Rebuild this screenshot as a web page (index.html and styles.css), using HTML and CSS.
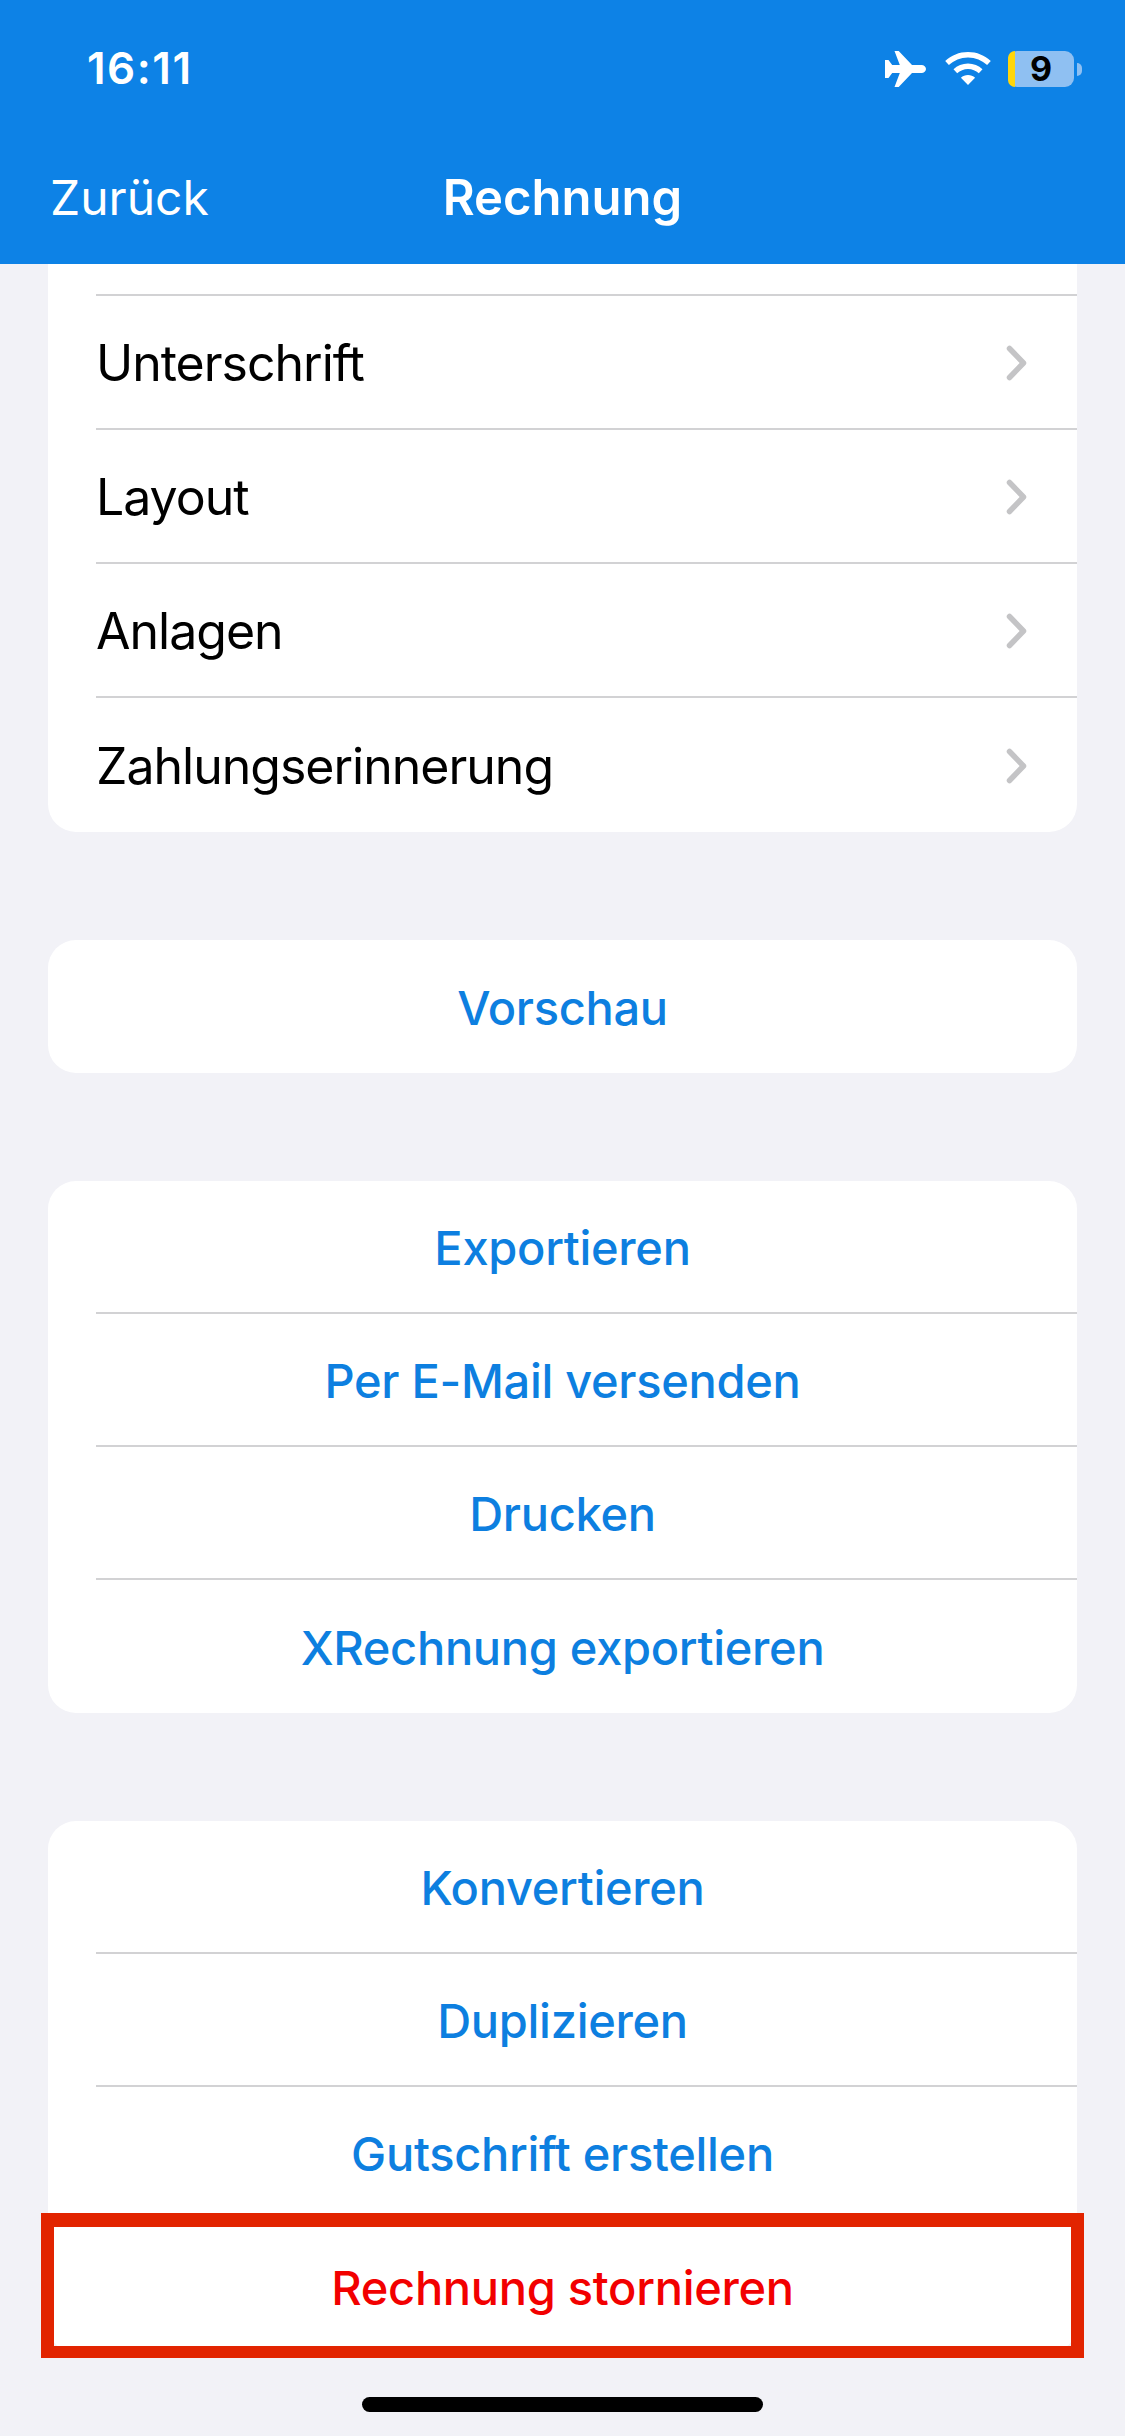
FILE: index.html
```html
<!DOCTYPE html>
<html lang="de">
<head>
<meta charset="utf-8">
<title>Rechnung</title>
<link rel="stylesheet" href="styles.css">
</head>
<body>
<div class="screen">
  <header class="header">
    <div class="status">
      <span class="time">16:11</span>
      <div class="status-icons">
        <svg class="plane" viewBox="0 0 41 36"><path fill="#fff" d="M9.500 0h4.200L27 14h9.500c2.500 0 4.500 1.800 4.500 4s-2 4-4.500 4H27L13.700 36H9.500l5.300-14H7.200L3.500 27H0V9h3.500l3.700 5h7.600z"/></svg>
        <svg class="wifi" viewBox="0 0 46 33"><path fill="#fff" d="M23 0c8.800 0 16.800 3.400 22.800 9l-3.700 4C37.100 8.300 30.400 5.400 23 5.400S8.900 8.300 3.900 13L.2 9C6.200 3.400 14.200 0 23 0zm0 11.500c5.600 0 10.700 2.100 14.500 5.700l-3.700 4c-2.900-2.600-6.700-4.300-10.800-4.300s-7.900 1.700-10.800 4.300l-3.700-4c3.800-3.600 8.900-5.700 14.500-5.700zm0 11.400c2.700 0 5.200 1 7.100 2.800L23 33l-7.100-7.300c1.900-1.800 4.400-2.800 7.100-2.800z"/></svg>
        <div class="battery">
          <span class="battery-level"></span>
          <span class="battery-num">9</span>
        </div>
        <span class="battery-cap"></span>
      </div>
    </div>
    <div class="nav">
      <span class="back">Zurück</span>
      <span class="title">Rechnung</span>
    </div>
  </header>

  <main class="content">
    <section class="card card-top">
      <div class="row row-clipped"></div>
      <div class="row"><span class="label">Unterschrift</span><svg class="chev" viewBox="0 0 21 36"><path d="M3.500 3.500L17.500 18L3.500 32.500"/></svg></div>
      <div class="row"><span class="label">Layout</span><svg class="chev" viewBox="0 0 21 36"><path d="M3.500 3.500L17.500 18L3.500 32.500"/></svg></div>
      <div class="row"><span class="label">Anlagen</span><svg class="chev" viewBox="0 0 21 36"><path d="M3.500 3.500L17.500 18L3.500 32.500"/></svg></div>
      <div class="row"><span class="label">Zahlungserinnerung</span><svg class="chev" viewBox="0 0 21 36"><path d="M3.500 3.500L17.500 18L3.500 32.500"/></svg></div>
    </section>

    <section class="card">
      <div class="row row-action"><span>Vorschau</span></div>
    </section>

    <section class="card">
      <div class="row row-action"><span>Exportieren</span></div>
      <div class="row row-action"><span>Per E-Mail versenden</span></div>
      <div class="row row-action"><span>Drucken</span></div>
      <div class="row row-action"><span>XRechnung exportieren</span></div>
    </section>

    <section class="card">
      <div class="row row-action"><span>Konvertieren</span></div>
      <div class="row row-action"><span>Duplizieren</span></div>
      <div class="row row-action"><span>Gutschrift erstellen</span></div>
      <div class="row row-action row-danger"><span>Rechnung stornieren</span></div>
    </section>
  </main>

  <div class="highlight"></div>
  <div class="home-indicator"></div>
</div>
</body>
</html>
```

FILE: styles.css
```css
* { box-sizing: border-box; }
html, body { margin: 0; padding: 0; }
body { font-family: Inter, "Liberation Sans", sans-serif; background: #f2f2f7; }

.screen {
  position: relative;
  width: 1125px;
  height: 2436px;
  overflow: hidden;
  background: #f2f2f7;
}

.header {
  height: 264px;
  background: #0d82e6;
  color: #fff;
  display: flex;
  flex-direction: column;
}
.status {
  height: 136px;
  display: flex;
  justify-content: space-between;
  padding: 46px 43px 0 87px;
}
.time { font-size: 44px; font-weight: 600; line-height: 44px; letter-spacing: 1.5px; }
.status-icons { display: flex; align-items: flex-start; padding-top: 5px; }
.plane { width: 41px; height: 36px; margin-right: 19px; }
.wifi { width: 46px; height: 33px; margin-top: 1px; margin-right: 17px; }
.battery {
  position: relative;
  width: 66px;
  height: 36px;
  border-radius: 9px;
  background: #8fc0f2;
  display: flex;
  align-items: center;
  justify-content: center;
}
.battery-level {
  position: absolute;
  left: 0;
  top: 0;
  bottom: 0;
  width: 7px;
  border-radius: 7px 0 0 7px;
  background: #ffd60a;
}
.battery-num { font-size: 34px; font-weight: 700; color: #000; line-height: 36px; }
.battery-cap {
  width: 5px;
  height: 13px;
  margin: 12px 0 0 3px;
  background: #8fc0f2;
  border-radius: 0 5px 5px 0;
}

.nav {
  flex: 1;
  position: relative;
  display: flex;
  align-items: center;
  justify-content: center;
  padding-bottom: 6px;
}
.back { position: absolute; left: 50px; font-size: 48px; }
.title { font-size: 49px; font-weight: 600; }

.content { display: flex; flex-direction: column; gap: 108px; padding: 0 48px; }
.card { background: #fff; border-radius: 28px; overflow: hidden; }
.card-top { border-radius: 0 0 28px 28px; }

.row {
  height: 133px;
  margin-left: 48px;
  padding-right: 50px;
  padding-top: 2px;
  display: flex;
  align-items: center;
  justify-content: space-between;
  border-bottom: 2px solid #d2d2d4;
  font-size: 50px;
  letter-spacing: -1px;
  color: #000;
}
.row:last-child { border-bottom: 0; }
.card-top .row { height: 134px; }
.card-top .row-clipped { height: 32px; }
.row-action {
  padding-top: 1px;
  padding-right: 48px;
  justify-content: center;
  font-size: 47px;
  font-weight: 450;
  letter-spacing: -0.3px;
  color: #0d7fe0;
}
.row-danger { color: #f20000; }
.chev { width: 21px; height: 36px; }
.chev path { fill: none; stroke: #c4c4c6; stroke-width: 5.5; stroke-linecap: round; stroke-linejoin: round; }

.highlight {
  position: absolute;
  left: 41px;
  top: 2213px;
  width: 1043px;
  height: 145px;
  border: solid #e22400;
  border-width: 14px 13px 12px 13px;
}
.home-indicator {
  position: absolute;
  left: 362px;
  top: 2397px;
  width: 401px;
  height: 15px;
  border-radius: 8px;
  background: #000;
}
```
